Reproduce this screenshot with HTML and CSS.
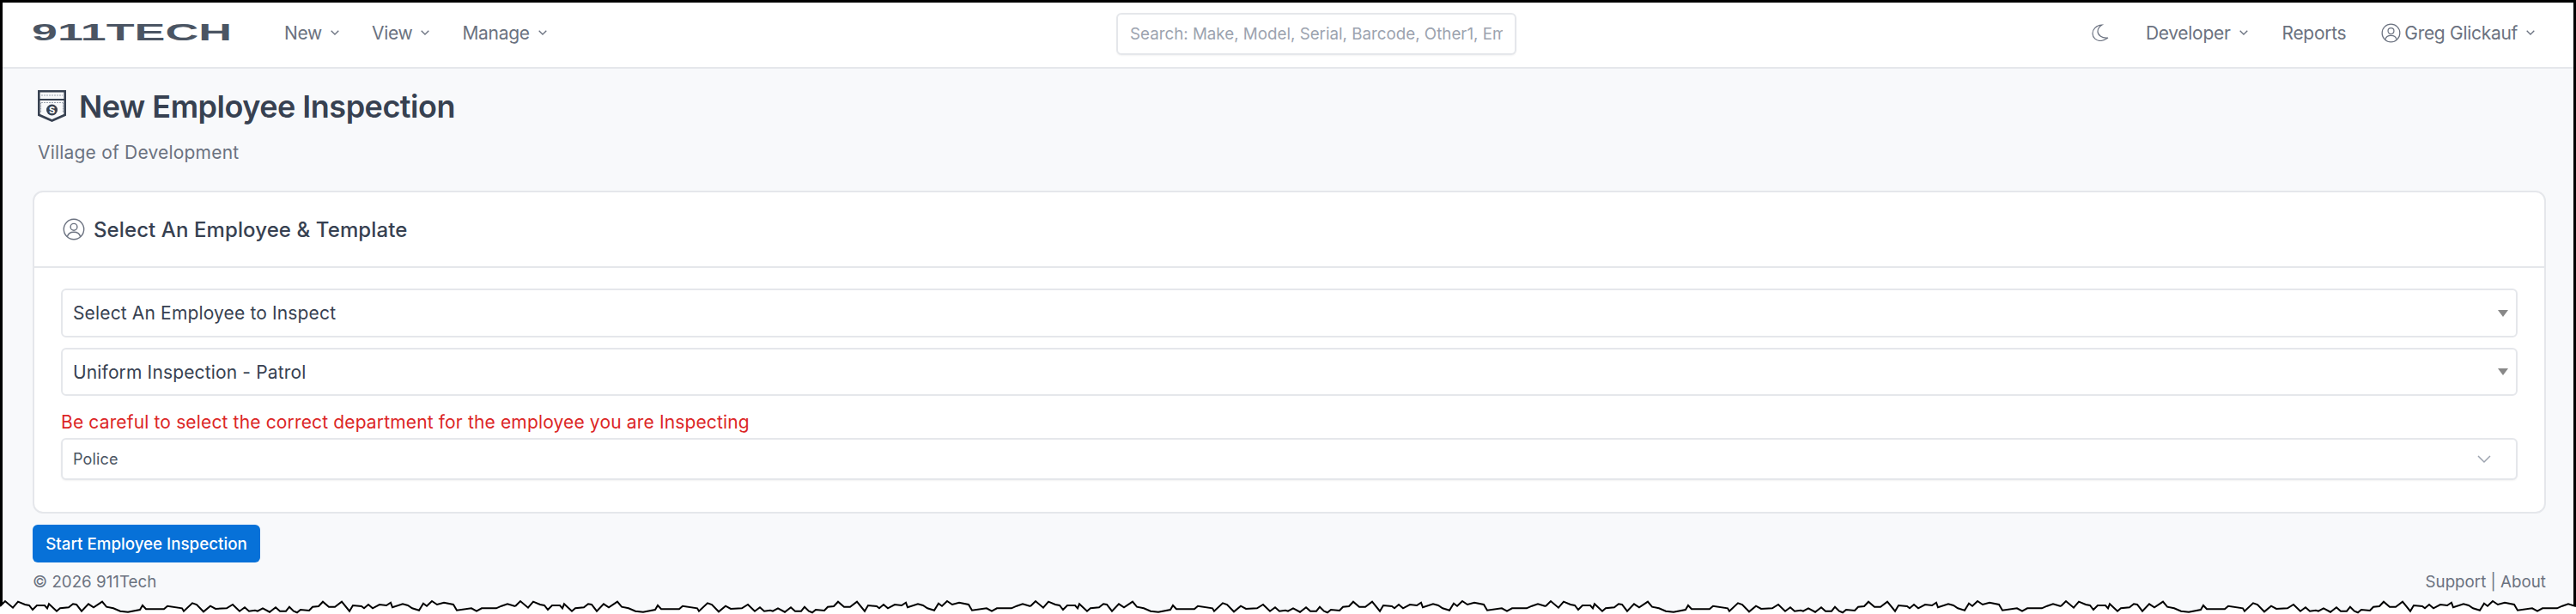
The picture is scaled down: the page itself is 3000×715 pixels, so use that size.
FILE: index.html
```html
<!DOCTYPE html>
<html lang="en">
<head>
  <meta charset="UTF-8" />
  <title>New Employee Inspection</title>
  <link rel="stylesheet" href="styles.css">
</head>
<body>
  <div class="frame">

    <!-- Top navigation -->
    <nav class="navbar">
      <div class="nav-left">
        <a class="logo"><span class="logo-text">911TECH</span></a>
        <a class="nav-link">New<svg class="caret" viewBox="0 0 10 6"><path d="M.7.7L5 5 9.300.7"/></svg></a>
        <a class="nav-link">View<svg class="caret" viewBox="0 0 10 6"><path d="M.7.7L5 5 9.300.7"/></svg></a>
        <a class="nav-link">Manage<svg class="caret" viewBox="0 0 10 6"><path d="M.7.7L5 5 9.300.7"/></svg></a>
      </div>
      <input class="search" type="text" placeholder="Search: Make, Model, Serial, Barcode, Other1, Employee" />
      <div class="nav-right">
        <svg class="moon" viewBox="0 0 20 20"><path d="M12 1C5 1.500 1 6 1 11c0 5 4.500 8.500 9 8.500 3.500 0 6-1.500 9-3.500-7 1-12-3-12-7.500C7 5.500 9 3 12 1z"/></svg>
        <a class="nav-link developer">Developer<svg class="caret" viewBox="0 0 10 6"><path d="M.7.7L5 5 9.300.7"/></svg></a>
        <a class="nav-link reports">Reports</a>
        <a class="nav-link user">
          <svg class="user-icon" viewBox="0 0 24 24"><circle cx="12" cy="12" r="10.800"/><circle cx="12" cy="9.500" r="3.600"/><path d="M5 20c.8-3.300 3.400-5 7-5s6.200 1.700 7 5"/></svg>
          <span>Greg Glickauf</span><svg class="caret" viewBox="0 0 10 6"><path d="M.7.7L5 5 9.300.7"/></svg>
        </a>
      </div>
    </nav>

    <main class="page">
      <div class="title-row">
        <svg class="badge" viewBox="0 0 33 37">
          <path class="badge-body" d="M1.300 1.300h30.400v27.500l-15.200 6.700-15.200-6.700z"/>
          <path class="badge-band" d="M1.300 11h30.400"/>
          <path class="badge-dash" d="M4 6h25M4 14.500h25M29.500 14.500v12M3.500 14.500v12"/>
          <circle class="badge-seal" cx="16.500" cy="23" r="6.500"/>
          <text class="badge-letter" x="16.500" y="27" text-anchor="middle">S</text>
        </svg>
        <h1>New Employee Inspection</h1>
      </div>
      <p class="subtitle">Village of Development</p>

      <section class="card">
        <div class="card-header">
          <svg class="user-icon header-icon" viewBox="0 0 24 24"><circle cx="12" cy="12" r="10.800"/><circle cx="12" cy="9.500" r="3.600"/><path d="M5 20c.8-3.300 3.400-5 7-5s6.200 1.700 7 5"/></svg>
          <h2>Select An Employee &amp; Template</h2>
        </div>
        <div class="card-body">
          <div class="select select-first">Select An Employee to Inspect <span class="arrow"></span></div>
          <div class="select select-second">Uniform Inspection - Patrol <span class="arrow"></span></div>
          <p class="warning">Be careful to select the correct department for the employee you are Inspecting</p>
          <div class="select select-small">Police <svg class="chevron" viewBox="0 0 16 10"><path d="M1 1l7 7 7-7"/></svg></div>
        </div>
      </section>

      <button class="btn-primary">Start Employee Inspection</button>

      <footer class="footer">
        <span>© 2026 911Tech</span>
        <span>Support | About</span>
      </footer>
    </main>

    <!-- torn edge of the screenshot -->
    <svg class="torn" viewBox="0 0 3000 25" width="3000" height="25">
      <defs>
        <g id="tear">
          <polygon class="tear-fill" points="0,16 6,10 15,17.700 21,10.700 29,14 34,15 38,20 43,15 52,15 55,18.300 57,13.300 66,21.700 70,18.300 80,17.300 85,13.300 89,14 95,21.700 103,13.300 109,17.300 119,10.700 124,16.700 132,18.300 140,21.700 149,22.700 163,20 166,15 170,19.300 191,19.300 195,15.700 212,18.300 214,21.700 224,12.300 229,14 237,22.300 245,15.700 251,19 264,18.300 271,14 279,21.700 285,17.300 290,21.700 297,20.700 300,21.700 306,18.300 314,22.700 321,17.300 326,21.700 333,21.700 337,16.700 342,21.700 346,23.300 350,20 360,21 364,16.700 371,16 376,10.700 383,16.700 390,16.700 398,10.700 407,21.700 411,15 421,16 424,18.300 429,14 434,18.300 442,14 450,15 455,11.700 457,17.300 469,13.300 475,15 480,18.300 488,20.700 493,12.700 497,15.700 503,10 509,14 517,11.700 528,14 532,20.700 549,18.300 555,21.700 561,18.300 578,18.300 584,15.700 591,13.300 600,16 600,25 0,25"/>
          <polyline class="tear-line" points="0,16 6,10 15,17.700 21,10.700 29,14 34,15 38,20 43,15 52,15 55,18.300 57,13.300 66,21.700 70,18.300 80,17.300 85,13.300 89,14 95,21.700 103,13.300 109,17.300 119,10.700 124,16.700 132,18.300 140,21.700 149,22.700 163,20 166,15 170,19.300 191,19.300 195,15.700 212,18.300 214,21.700 224,12.300 229,14 237,22.300 245,15.700 251,19 264,18.300 271,14 279,21.700 285,17.300 290,21.700 297,20.700 300,21.700 306,18.300 314,22.700 321,17.300 326,21.700 333,21.700 337,16.700 342,21.700 346,23.300 350,20 360,21 364,16.700 371,16 376,10.700 383,16.700 390,16.700 398,10.700 407,21.700 411,15 421,16 424,18.300 429,14 434,18.300 442,14 450,15 455,11.700 457,17.300 469,13.300 475,15 480,18.300 488,20.700 493,12.700 497,15.700 503,10 509,14 517,11.700 528,14 532,20.700 549,18.300 555,21.700 561,18.300 578,18.300 584,15.700 591,13.300 600,16"/>
        </g>
      </defs>
      <use href="#tear" x="0"/>
      <use href="#tear" x="600"/>
      <use href="#tear" x="1200"/>
      <use href="#tear" x="1800"/>
      <use href="#tear" x="2400"/>
    </svg>
  </div>
</body>
</html>
```

FILE: styles.css
```css
* {
  box-sizing: border-box;
}
html, body {
  margin: 0;
  padding: 0;
  height: 715px;
  overflow: hidden;
  background-color: #fff;
  font-family: Inter, "Liberation Sans", sans-serif;
}
.frame {
  position: relative;
  height: 715px;
  border: solid #000;
  border-width: 3px 3px 0 3px;
  background-color: #f8f9fb;
}

/* navbar */
.navbar {
  display: flex;
  align-items: center;
  justify-content: space-between;
  height: 77px;
  padding: 0 45px 5px 34px;
  background-color: #fff;
  border-bottom: 2px solid #e5e7eb;
}
.nav-left, .nav-right {
  display: flex;
  align-items: center;
}
.nav-left {
  width: 1263px;
}
.logo {
  display: block;
  width: 228px;
  margin-right: 66px;
}
.logo-text {
  display: inline-block;
  font-family: "Liberation Sans", sans-serif;
  font-weight: 700;
  font-size: 28px;
  line-height: 24px;
  color: #4b5563;
  transform: scaleX(1.92);
  transform-origin: left center;
}
.nav-link {
  display: flex;
  align-items: center;
  font-size: 21px;
  letter-spacing: -0.3px;
  color: #6b7280;
  margin-right: 38px;
}
.nav-right .nav-link {
  margin-right: 0;
}
.caret {
  width: 10px;
  height: 6px;
  margin-left: 10px;
  fill: none;
  stroke: #6b7280;
  stroke-width: 1.300;
}
.search {
  width: 466px;
  height: 49px;
  margin-top: 2px;
  padding: 0 14px;
  font-family: inherit;
  font-size: 18.750px;
  color: #374151;
  background-color: #fff;
  border: 2px solid #e5e7eb;
  border-radius: 6px;
  box-shadow: 0 1px 2px rgba(0, 0, 0, 0.05);
  outline: none;
}
.search::placeholder {
  color: #9ca3af;
}
.nav-right {
  flex: 1;
  justify-content: flex-end;
}
.moon {
  width: 20px;
  height: 20px;
  margin-right: 43px;
  fill: none;
  stroke: #6b7280;
  stroke-width: 1.200;
}
.nav-right .reports {
  margin: 0 41px 0 40px;
}
.user-icon {
  width: 23px;
  height: 23px;
  margin-right: 4px;
  fill: none;
  stroke: #6b7280;
  stroke-width: 1.300;
}

/* page heading */
.page {
  padding: 25px 32px 0 35px;
}
.title-row {
  display: flex;
  align-items: center;
  height: 37px;
}
.badge {
  width: 33px;
  height: 37px;
  margin: 0 15px 0 6px;
}
.badge-body {
  fill: #f8f9fb;
  stroke: #374151;
  stroke-width: 2.600;
}
.badge-band {
  fill: none;
  stroke: #374151;
  stroke-width: 2;
}
.badge-dash {
  fill: none;
  stroke: #9ca3af;
  stroke-width: 1.200;
  stroke-dasharray: 2 1;
}
.badge-seal {
  fill: #374151;
}
.badge-letter {
  font-size: 11px;
  font-weight: 700;
  fill: #fff;
}
h1 {
  margin: 0;
  font-size: 36px;
  font-weight: 600;
  letter-spacing: -0.5px;
  color: #374151;
  white-space: nowrap;
}
.subtitle {
  margin: 20px 0 28px 6px;
  font-size: 21px;
  line-height: 32px;
  letter-spacing: 0.2px;
  color: #6b7280;
}

/* card */
.card {
  background-color: #fff;
  border: 2px solid #e5e7eb;
  border-radius: 12px;
}
.card-header {
  display: flex;
  align-items: center;
  height: 88px;
  padding-left: 33px;
  border-bottom: 2px solid #e5e7eb;
}
.header-icon {
  width: 26px;
  height: 26px;
  margin-right: 10px;
}
h2 {
  margin: 0;
  font-size: 24px;
  font-weight: 500;
  letter-spacing: 0.1px;
  color: #374151;
}
.card-body {
  padding: 24px 31px 37px;
}
.select {
  display: flex;
  align-items: center;
  justify-content: space-between;
  padding: 0 9px 0 12px;
  font-size: 21px;
  letter-spacing: 0.15px;
  color: #374151;
  background-color: #fff;
  border: 2px solid #e5e7eb;
  border-radius: 6px;
}
.select-first {
  height: 57px;
  margin-bottom: 12px;
}
.select-second {
  height: 56px;
}
.select-small {
  height: 49px;
  padding-right: 29px;
  font-size: 18px;
  color: #4b5563;
  box-shadow: 0 1px 2px rgba(0, 0, 0, 0.05);
}
.arrow {
  width: 0;
  height: 0;
  border-left: 6.500px solid transparent;
  border-right: 6.500px solid transparent;
  border-top: 8px solid #888;
}
.chevron {
  width: 16px;
  height: 10px;
  fill: none;
  stroke: #9ca3af;
  stroke-width: 1.500;
}
.warning {
  margin: 14px 0 2px;
  font-size: 21px;
  line-height: 33px;
  letter-spacing: 0.15px;
  color: #dc2626;
}

/* bottom */
.btn-primary {
  display: block;
  height: 44px;
  width: 265px;
  margin-top: 13px;
  padding: 0;
  font-family: inherit;
  font-size: 18.750px;
  font-weight: 500;
  color: #fff;
  background-color: #0771d8;
  border: none;
  border-radius: 6px;
}
.footer {
  display: flex;
  justify-content: space-between;
  margin-top: 9px;
  font-size: 18.750px;
  line-height: 28px;
  color: #6b7280;
}

/* torn edge */
.torn {
  position: absolute;
  left: -3px;
  top: 687px;
}
.tear-fill {
  fill: #fff;
}
.tear-line {
  fill: none;
  stroke: #000;
  stroke-width: 2;
}
```
